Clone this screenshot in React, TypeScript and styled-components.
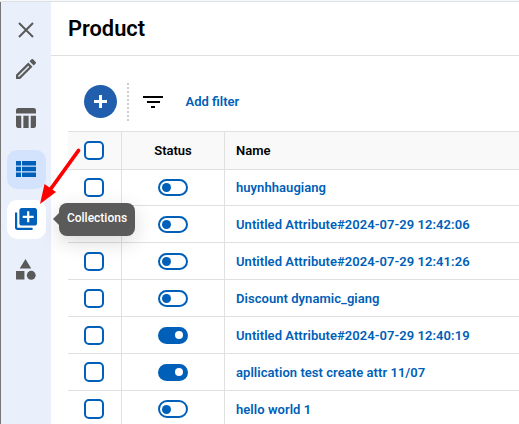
import React from "react";
import styled, { createGlobalStyle } from "styled-components";

const BLUE = "#005fb8";
const GRAY = "#5a5a5a";

const GlobalStyle = createGlobalStyle`
  *, *::before, *::after { box-sizing: border-box; }
  html, body { margin: 0; overflow: hidden; background: #fff; }
  body { font-family: Roboto, sans-serif; font-size: 13px; color: #000; }
  button { font: inherit; border: 0; padding: 0; background: none; }
`;

const Shell = styled.div`
  position: relative;
  display: flex;
  flex-direction: column;
  width: 519px;
  height: 424px;
  overflow: hidden;
  background: #fff;
`;

const TopEdge = styled.div`
  flex: none;
  height: 2px;
  background: #f7f9fc;
  border-bottom: 1px solid #dfe2e5;
`;

const Body = styled.div`
  display: flex;
  flex: 1;
  min-height: 0;
`;

const Sidebar = styled.nav`
  flex: none;
  width: 51px;
  padding-left: 6px;
  border-left: 1px solid #777;
  background: #e9f0fb;
  display: flex;
  flex-direction: column;
`;

const NavButton = styled.button<{ $bg?: string; $gap: number; $h?: number }>`
  flex: none;
  display: flex;
  align-items: center;
  justify-content: center;
  width: 39px;
  height: ${(p) => p.$h ?? 39}px;
  margin-top: ${(p) => p.$gap}px;
  padding: 0 1px 1px 0;
  border-radius: 10px;
  background: ${(p) => p.$bg ?? "transparent"};
`;

const Icon = styled.svg`
  display: block;
  flex: none;
  fill: currentColor;
  color: ${(p) => p.color ?? GRAY};
`;

const Main = styled.main`
  flex: 1;
  min-width: 0;
  display: flex;
  flex-direction: column;
`;

const Header = styled.header`
  flex: none;
  height: 54px;
  padding: 0 17px;
  border-bottom: 1px solid #e0e0e0;
`;

const Title = styled.h1`
  margin: 0;
  font-size: 21.8px;
  font-weight: 600;
  line-height: 53px;
`;

const Toolbar = styled.div`
  flex: none;
  display: flex;
  align-items: center;
  height: 75px;
  padding: 16px 0 0 33px;
`;

const AddButton = styled.button`
  display: flex;
  align-items: center;
  justify-content: center;
  width: 33px;
  height: 33px;
  border-radius: 50%;
  background: #215fae;
`;

const Dots = styled.div`
  width: 2px;
  height: 38px;
  margin: 0 14px 0 10px;
  background: repeating-linear-gradient(#ccc 0 2px, transparent 2px 4px);
`;

const FilterLink = styled.button`
  margin-left: 22.5px;
  color: ${BLUE};
  font-weight: 600;
`;

const Table = styled.div`
  flex: none;
  margin-left: 17px;
  border-top: 1px solid #e0e0e0;
`;

const Row = styled.div<{ $h: number; $head?: boolean }>`
  display: grid;
  grid-template-columns: 54px 103px 1fr;
  height: ${(p) => p.$h}px;
  border-bottom: 1px solid #e0e0e0;
  background: ${(p) => (p.$head ? "#f9f9f9" : "#fff")};
`;

const Cell = styled.div<{ $pad?: number; $center?: boolean; $link?: boolean }>`
  display: flex;
  align-items: center;
  justify-content: ${(p) => (p.$center ? "center" : "flex-start")};
  padding-left: ${(p) => p.$pad ?? 0}px;
  border-right: 1px solid #e0e0e0;
  font-weight: 600;
  letter-spacing: ${(p) => (p.$link ? "0.05px" : "normal")};
  white-space: nowrap;
  color: ${(p) => (p.$link ? BLUE : "#000")};
  &:last-child { border-right: 0; }
`;

const Checkbox = styled.span<{ $h?: number }>`
  width: 20px;
  height: ${(p) => p.$h ?? 19}px;
  border: 2px solid ${BLUE};
  border-radius: 5px;
  background: #fff;
`;

const Switch = styled.span<{ $on: boolean; $h?: number }>`
  display: flex;
  align-items: center;
  justify-content: ${(p) => (p.$on ? "flex-end" : "flex-start")};
  width: 30px;
  height: ${(p) => p.$h ?? 17}px;
  padding: 0 3px 0 2px;
  border: 2px solid ${BLUE};
  border-radius: 9px;
  background: ${(p) => (p.$on ? BLUE : "#fff")};
  &::after {
    content: "";
    width: ${(p) => (p.$on ? 8 : 9)}px;
    height: ${(p) => (p.$on ? 8 : 9)}px;
    border-radius: 50%;
    background: ${(p) => (p.$on ? "#fff" : BLUE)};
  }
`;

const Tooltip = styled.div`
  position: absolute;
  left: 59px;
  top: 203px;
  width: 76px;
  height: 33px;
  border-radius: 8px;
  background: ${GRAY};
  color: #fff;
  font-size: 12px;
  font-weight: 500;
  line-height: 30px;
  text-align: center;
  box-shadow: 0 6px 20px rgba(0, 0, 0, 0.15);
  &::before {
    content: "";
    position: absolute;
    left: -6px;
    top: 10px;
    border: solid transparent;
    border-width: 6px 6px 6px 0;
    border-right-color: ${GRAY};
  }
`;

const Arrow = styled.svg`
  position: absolute;
  left: 34px;
  top: 140px;
`;

const rows = [
  { name: "huynhhaugiang", on: false, h: 36 },
  { name: "Untitled Attribute#2024-07-29 12:42:06", on: false, h: 37 },
  { name: "Untitled Attribute#2024-07-29 12:41:26", on: false, h: 37 },
  { name: "Discount dynamic_giang", on: false, h: 37 },
  { name: "Untitled Attribute#2024-07-29 12:40:19", on: true, h: 37 },
  { name: "apllication test create attr 11/07", on: true, h: 37, box: 20 },
  { name: "hello world 1", on: false, h: 37, box: 20, sw: 18 },
];

export default function App() {
  return (
    <Shell>
      <GlobalStyle />
      <TopEdge />
      <Body>
        <Sidebar>
          <NavButton $gap={9} aria-label="Close">
            <Icon width="16" height="16" viewBox="0 0 16 16">
              <path d="M1 1l14 14M15 1l-14 14" stroke="currentColor" strokeWidth="2" />
            </Icon>
          </NavButton>
          <NavButton $gap={0} aria-label="Edit">
            <Icon width="20" height="20" viewBox="3 3 18 18">
              <path d="M14.06 9.02l.92.92L5.92 19H5v-.92l9.06-9.06M17.66 3c-.25 0-.51.1-.7.29l-1.83 1.83 3.75 3.75 1.83-1.83c.39-.39.39-1.02 0-1.41l-2.34-2.34c-.2-.2-.45-.29-.71-.29zm-3.6 3.19L3 17.25V21h3.75L17.81 9.94l-3.75-3.75z" />
            </Icon>
          </NavButton>
          <NavButton $gap={10} aria-label="Table">
            <Icon width="20" height="20" viewBox="3 3 19 18" preserveAspectRatio="none">
              <path d="M10 10.02h5V21h-5zM17 21h3c1.1 0 2-.9 2-2v-9h-5v11zm3-18H5c-1.1 0-2 .9-2 2v3h19V5c0-1.1-.9-2-2-2zM3 19c0 1.1.9 2 2 2h3V10H3v9z" />
            </Icon>
          </NavButton>
          <NavButton $gap={12} $bg="#d3e3fd" aria-label="List">
            <Icon color={BLUE} width="20" height="16" viewBox="0 0 20 16">
              <path d="M0 0h5v4.4H0zM6 0h14v4.4H6zM0 5.8h5v4.4H0zM6 5.8h14v4.4H6zM0 11.6h5V16H0zM6 11.6h14V16H6z" />
            </Icon>
          </NavButton>
          <NavButton $gap={11} $bg="#fff" aria-label="Collections">
            <Icon color={BLUE} width="22" height="22" viewBox="2 2 20 20">
              <path d="M4 6H2v14c0 1.1.9 2 2 2h14v-2H4V6zm16-4H8c-1.1 0-2 .9-2 2v12c0 1.1.9 2 2 2h12c1.1 0 2-.9 2-2V4c0-1.1-.9-2-2-2zm-1 9h-4v4h-2v-4H9V9h4V5h2v4h4v2z" />
            </Icon>
          </NavButton>
          <NavButton $gap={11} aria-label="Categories">
            <Icon width="20" height="21" viewBox="3 2 19 20">
              <path d="M12 2l-5.5 9h11zM3 13.5h8v8H3z" />
              <circle cx="17.5" cy="17.5" r="4.2" />
            </Icon>
          </NavButton>
        </Sidebar>
        <Main>
          <Header>
            <Title>Product</Title>
          </Header>
          <Toolbar>
            <AddButton aria-label="Add">
              <svg width="15" height="15" viewBox="0 0 15 15">
                <path d="M7.5 1v13M1 7.5h13" stroke="#fff" strokeWidth="3" />
              </svg>
            </AddButton>
            <Dots />
            <Icon color="#000" width="20" height="14" viewBox="0 0 20 14">
              <path d="M0 1h20v2H0zM4 6h13v2H4zM8 11h4v2H8z" />
            </Icon>
            <FilterLink>Add filter</FilterLink>
          </Toolbar>
          <Table>
            <Row $h={38} $head>
              <Cell $pad={16}><Checkbox /></Cell>
              <Cell $center>Status</Cell>
              <Cell $pad={11}>Name</Cell>
            </Row>
            {rows.map((r) => (
              <Row key={r.name} $h={r.h}>
                <Cell $pad={16}><Checkbox $h={r.box} /></Cell>
                <Cell $center><Switch $on={r.on} $h={r.sw} /></Cell>
                <Cell $pad={11} $link>{r.name}</Cell>
              </Row>
            ))}
          </Table>
        </Main>
      </Body>
      <Tooltip>Collections</Tooltip>
      <Arrow width="56" height="70" viewBox="0 0 56 70" aria-hidden="true">
        <path d="M44.5 10.5L16 50" stroke="#f00" strokeWidth="3.8" strokeLinecap="round" />
        <path d="M6 64l4.5-20L22 52z" fill="#f00" />
      </Arrow>
    </Shell>
  );
}
